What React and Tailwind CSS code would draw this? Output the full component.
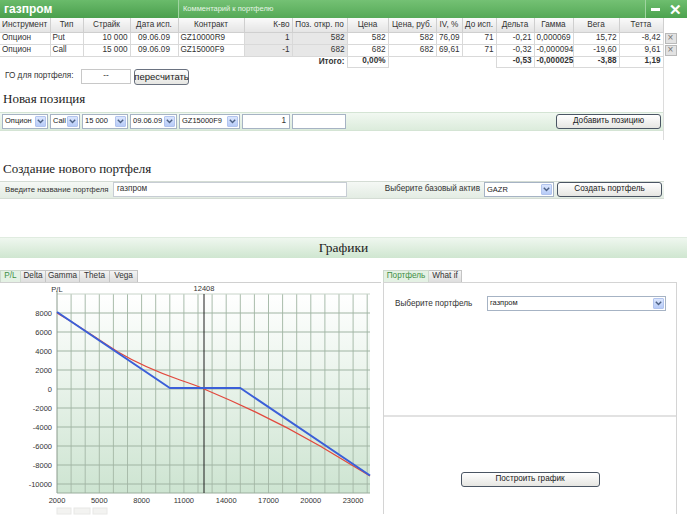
import React from 'react';

const cols = [
    { w: 50, h: 'Инструмент', ha: 'text-left' },
    { w: 33, h: 'Тип', ha: 'text-center' },
    { w: 47, h: 'Страйк', ha: 'text-center' },
    { w: 48, h: 'Дата исп.', ha: 'text-center' },
    { w: 66, h: 'Контракт', ha: 'text-center' },
    { w: 48, h: 'К-во', ha: 'text-right' },
    { w: 55, h: 'Поз. откр. по', ha: 'text-center' },
    { w: 41, h: 'Цена', ha: 'text-center' },
    { w: 48, h: 'Цена, руб.', ha: 'text-center' },
    { w: 26, h: 'IV, %', ha: 'text-center' },
    { w: 34, h: 'До исп.', ha: 'text-center' },
    { w: 38, h: 'Дельта', ha: 'text-center' },
    { w: 39, h: 'Гамма', ha: 'text-center' },
    { w: 46, h: 'Вега', ha: 'text-center' },
    { w: 44, h: 'Тетта', ha: 'text-center' },
    { w: 13, h: '', ha: 'text-center' },
];

const rows = [
    ['Опцион', 'Put', '10 000', '09.06.09', 'GZ10000R9', '1', '582', '582', '582', '76,09', '71', '-0,21', '0,000069', '15,72', '-8,42'],
    ['Опцион', 'Call', '15 000', '09.06.09', 'GZ15000F9', '-1', '682', '682', '682', '69,61', '71', '-0,32', '-0,000094', '-19,60', '9,61'],
];

// alignment of data cells per column
const cellAlign = ['text-left', 'text-left', 'text-right', 'text-center', 'text-left', 'text-right', 'text-right', 'text-right', 'text-right', 'text-right', 'text-right', 'text-right', 'text-right', 'text-right', 'text-right'];

function Arrow() {
    return (
        <span className="flex shrink-0 items-center justify-center w-[11px] h-[11px] mr-[1px] bg-gradient-to-b from-[#dbe6fd] to-[#b7cbf7] border border-[#b2c4ee] rounded-[1px]">
            <svg width="7" height="5" viewBox="0 0 7 5">
                <path d="M0.8 0.8 L3.5 3.6 L6.2 0.8" fill="none" stroke="#4d6185" strokeWidth="1.4" />
            </svg>
        </span>
    );
}

function Select({ value, className = '' }) {
    return (
        <div className={`flex items-center h-[15px] bg-white border border-[#a6b3c4] text-[7.5px] ${className}`}>
            <span className="flex-1 pl-[2px] whitespace-nowrap text-[#222]">{value}</span>
            <Arrow />
        </div>
    );
}

function Button({ children, className = '' }) {
    return (
        <div className={`flex items-center justify-center h-[15px] border border-[#4a5563] rounded-[3px] bg-gradient-to-b from-white to-[#e6e6e2] text-[#222] whitespace-nowrap ${className}`}>
            {children}
        </div>
    );
}

function Chart() {
    const xOf = (v) => 57 + (v - 2000) * 0.0141;
    const yOf = (p) => 106 - p * 0.0095;
    const vLines = [];
    for (let k = 3000; k <= 24000; k += 1000) vLines.push(xOf(k));
    const yVals = [8000, 6000, 4000, 2000, 0, -2000, -4000, -6000, -8000, -10000];
    const xVals = [2000, 5000, 8000, 11000, 14000, 17000, 20000, 23000];
    const blue = `M57,29 L${xOf(10000)},105 L${xOf(15000)},105 L370,192.5`;
    const red = 'M57,30 C75,40 100,58 118,69 C140,82 160,90 180,97 C195,102 200,104 204,106 C240,121 280,140 320,163 C340,175 355,184 370,193';
    const font = 'Liberation Sans, Arial, sans-serif';

    return (
        <svg width="380" height="232" viewBox="0 0 380 232">
            <defs>
                <linearGradient id="plotbg" x1="0" y1="0" x2="0" y2="1">
                    <stop offset="0" stopColor="#ffffff" />
                    <stop offset="1" stopColor="#cde4d1" />
                </linearGradient>
            </defs>
            <rect x="57" y="11" width="313" height="199" fill="url(#plotbg)" />
            {vLines.map((x, i) => (
                <line key={i} x1={x} y1="11" x2={x} y2="210" stroke="#a9bcab" strokeWidth="1" />
            ))}
            {yVals.map((v) => (
                <line key={v} x1="57" y1={yOf(v)} x2="370" y2={yOf(v)} stroke="#a0b4a3" strokeWidth="1" />
            ))}
            <line x1="57" y1="11" x2="370" y2="11" stroke="#c8d4c9" />
            <line x1="57" y1="210" x2="370" y2="210" stroke="#9aae9d" />
            <line x1="57" y1="8" x2="57" y2="210" stroke="#8a9a8c" />
            <line x1="204" y1="11" x2="204" y2="210" stroke="#1c1c1c" strokeWidth="1" />
            <path d={red} fill="none" stroke="#e2483d" strokeWidth="1.3" />
            <path d={blue} fill="none" stroke="#3b5fd8" strokeWidth="2" strokeLinejoin="round" />
            <text x="57" y="9" fontSize="7.5" textAnchor="middle" fill="#333" fontFamily={font}>P/L</text>
            <text x="204" y="8" fontSize="7.5" textAnchor="middle" fill="#333" fontFamily={font}>12408</text>
            {yVals.map((v) => (
                <text key={v} x="52" y={yOf(v) + 3} fontSize="7.5" textAnchor="end" fill="#333" fontFamily={font}>{v}</text>
            ))}
            {xVals.map((v) => (
                <text key={v} x={xOf(v)} y="220" fontSize="7.5" textAnchor="middle" fill="#333" fontFamily={font}>{v}</text>
            ))}
            <rect x="57" y="225" width="14" height="6" fill="#f3f3f1" stroke="#e8e8e6" />
            <rect x="74" y="225" width="16" height="6" fill="#f3f3f1" stroke="#e8e8e6" />
            <rect x="93" y="225" width="14" height="6" fill="#f3f3f1" stroke="#e8e8e6" />
        </svg>
    );
}

export default function App() {
    return (
        <div className="relative w-[687px] h-[515px] overflow-hidden bg-white text-[8.2px] leading-none text-[#333] font-['Liberation_Sans',Arial,sans-serif]">
            {/* Window header */}
            <div className="flex h-[18px] text-white">
                <div className="w-[179px] flex items-center pl-[4px] bg-gradient-to-b from-[#6abb6b] to-[#4a9f4d] font-bold text-[12px] border-r border-[#9fd4a0]">газпром</div>
                <div className="flex-1 flex items-center pl-[4px] bg-gradient-to-b from-[#74c174] to-[#55a957] text-[7.5px] text-[#e6f5e6]">Комментарий к портфелю</div>
                <div className="w-[42px] flex items-center justify-around bg-gradient-to-b from-[#6ebe6f] to-[#4ba24e] border-l border-[#9fd4a0] font-bold text-[15px]">
                    <span className="block w-[9px] h-[3px] bg-white mt-[1px]" />
                    <span className="leading-none">✕</span>
                </div>
            </div>

            {/* Positions table */}
            <table className="table-fixed border-collapse w-[676px]">
                <colgroup>
                    {cols.map((c, i) => <col key={i} style={{ width: c.w }} />)}
                </colgroup>
                <thead>
                    <tr className="h-[14px]">
                        {cols.map((c, i) => (
                            <th key={i} className={`${c.ha} font-normal px-[2px] whitespace-nowrap overflow-hidden ${i === 15 ? 'bg-white' : 'bg-gradient-to-b from-[#fafafa] to-[#e4e4e4] border-r border-b border-[#cfcfcf]'}`}>{c.h}</th>
                        ))}
                    </tr>
                </thead>
                <tbody>
                    {rows.map((r, ri) => (
                        <tr key={ri} className="h-[12px]">
                            {r.map((v, i) => (
                                <td key={i} className={`${cellAlign[i]} px-[2px] border-r border-b border-[#d9d9d9] whitespace-nowrap ${i === 5 || i === 6 ? 'bg-[#e7e7e7]' : ''}`}>{v}</td>
                            ))}
                            <td className="p-0 pl-[1px]">
                                <div className="w-[12px] h-[11px] flex items-center justify-center bg-[#e2e2e2] border border-[#b9b9b9] text-[#777] text-[10px]">×</div>
                            </td>
                        </tr>
                    ))}
                    <tr className="h-[11px] font-bold">
                        <td colSpan={6} />
                        <td className="text-right px-[2px] border-r border-[#d9d9d9]">Итого:</td>
                        <td className="text-right px-[2px] border-r border-b border-[#d9d9d9]">0,00%</td>
                        <td colSpan={3} />
                        <td className="text-right px-[2px] border-x border-b border-[#d9d9d9]">-0,53</td>
                        <td className="text-right px-[2px] border-r border-b border-[#d9d9d9]">-0,000025</td>
                        <td className="text-right px-[2px] border-r border-b border-[#d9d9d9]">-3,88</td>
                        <td className="text-right px-[2px] border-r border-b border-[#d9d9d9]">1,19</td>
                        <td />
                    </tr>
                </tbody>
            </table>

            {/* New position block */}
            <div className="w-[664px] border-r border-[#dcdcdc] pb-[9px]">
                <div className="flex items-center h-[18px] pl-[5px]">
                    <span className="w-[76px]">ГО для портфеля:</span>
                    <div className="w-[50px] h-[15px] border border-[#c8c8c8] flex items-center justify-center">--</div>
                    <Button className="ml-[3px] w-[55px] h-[16px] text-[9.5px] rounded-[2px] border-[#6a7280]">пересчитать</Button>
                </div>
                <div className="h-[26px] flex items-center pl-[3px] font-['Liberation_Serif',serif] text-[13px] text-[#222]">Новая позиция</div>
                <div className="flex items-center h-[19px] gap-[2px] pl-[2px] pr-[2px] bg-gradient-to-b from-[#f1f8f1] to-[#dcecdc] border-y border-[#d4e4d4]">
                    <Select value="Опцион" className="w-[46px]" />
                    <Select value="Call" className="w-[30px]" />
                    <Select value="15 000" className="w-[46px]" />
                    <Select value="09.06.09" className="w-[47px]" />
                    <Select value="GZ15000F9" className="w-[61px]" />
                    <div className="w-[48px] h-[15px] bg-white border border-[#a6b3c4] flex items-center justify-end pr-[3px]">1</div>
                    <div className="w-[54px] h-[15px] bg-white border border-[#a6b3c4]" />
                    <Button className="ml-auto w-[105px]">Добавить позицию</Button>
                </div>
            </div>

            {/* New portfolio block */}
            <div className="h-[41px] flex items-end pl-[3px] pb-[6px] font-['Liberation_Serif',serif] text-[13px] text-[#222]">Создание нового портфеля</div>
            <div className="w-[664px] flex items-center h-[18px] pl-[5px] pr-[2px] bg-gradient-to-b from-[#f5f8f5] to-[#e3ece3] border-y border-[#d4dcd4]">
                <span className="w-[108px] whitespace-nowrap text-[7.8px]">Введите название портфеля</span>
                <div className="w-[234px] h-[15px] bg-white border border-[#c7cdd4] flex items-center pl-[3px]">газпром</div>
                <span className="flex-1 text-right pr-[4px] whitespace-nowrap">Выберите базовый актив</span>
                <Select value="GAZR" className="w-[70px]" />
                <Button className="ml-[3px] w-[105px]">Создать портфель</Button>
            </div>

            {/* Charts section */}
            <div className="mt-[38px] h-[21px] flex items-center justify-center bg-gradient-to-b from-[#eff7ef] to-[#cfe6d0] border-t border-[#e0ece0] font-['Liberation_Serif',serif] text-[13.5px] text-[#222]">Графики</div>

            <div className="mt-[12px] flex">
                <div className="w-[381px]">
                    <div className="flex h-[12px] items-end">
                        <div className="w-[21px] h-[12px] flex items-center justify-center bg-[#e4f1e4] border border-b-0 border-[#cdd9cd] text-[#3f8f45]">P/L</div>
                        {[['Delta', 25], ['Gamma', 34], ['Theta', 30], ['Vega', 28]].map(([t, w]) => (
                            <div key={t} style={{ width: w }} className="h-[12px] flex items-center justify-center bg-gradient-to-b from-[#f4f4f4] to-[#dedede] border border-l-0 border-b-0 border-[#c4c4c4]">{t}</div>
                        ))}
                    </div>
                    <div className="border-t border-[#d0d0d0] w-[381px]">
                        <Chart />
                    </div>
                </div>

                <div className="ml-[2px] w-[294px] flex flex-col">
                    <div className="flex h-[12px] items-end">
                        <div className="w-[46px] h-[12px] flex items-center justify-center bg-[#e4f1e4] border border-b-0 border-[#cdd9cd] text-[#3f8f45]">Портфель</div>
                        <div className="w-[33px] h-[12px] flex items-center justify-center bg-gradient-to-b from-[#f4f4f4] to-[#dedede] border border-l-0 border-b-0 border-[#c4c4c4]">What if</div>
                    </div>
                    <div className="h-[232px] border border-b-0 border-[#d4d4d4] flex flex-col">
                        <div className="h-[134px] border-b-2 border-[#e2e2e2] pt-[13px] flex items-start">
                            <span className="w-[103px] pl-[11px] leading-[15px] whitespace-nowrap">Выберите портфель</span>
                            <Select value="газпром" className="w-[179px]" />
                        </div>
                        <div className="flex-1 flex justify-center pt-[55px]">
                            <Button className="w-[139px] h-[14px]">Построить график</Button>
                        </div>
                    </div>
                </div>
            </div>
        </div>
    );
}
